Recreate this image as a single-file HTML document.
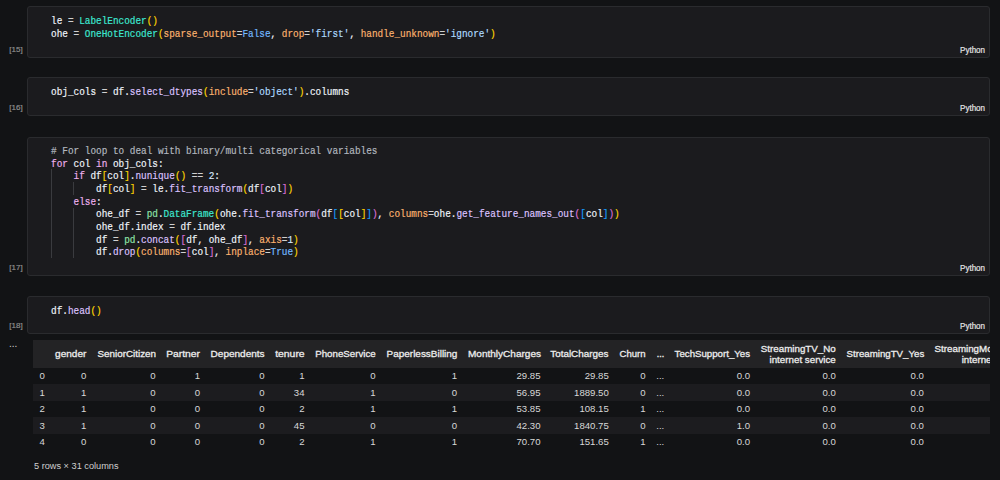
<!DOCTYPE html>
<html><head><meta charset="utf-8">
<style>
html,body{margin:0;padding:0}
body{width:1000px;height:480px;overflow:hidden;position:relative;background:#121315;font-family:"Liberation Sans",sans-serif}
.cell{position:absolute;left:27px;width:961px;background:#1b1b1e;border:1px solid #2a2b2e;border-radius:3px}
.code{position:absolute;left:51px;margin:0;font-family:"Liberation Mono",monospace;-webkit-text-stroke:0.2px;font-size:11.6px;line-height:12.7px;transform:scaleX(0.809);transform-origin:0 0;color:#f0f4fa;white-space:pre}
.py{position:absolute;left:957px;width:28px;margin-top:1.2px;text-align:right;font-size:8.7px;line-height:10px;color:#e4e4e4;-webkit-text-stroke:0.2px;transform:scaleX(0.92);transform-origin:100% 0}
.cnt{position:absolute;left:0px;width:22.7px;margin-top:0.6px;text-align:right;font-size:8px;line-height:10px;color:#8e8e8e;-webkit-text-stroke:0.2px}
.guide{position:absolute;width:1px;background:#3a3b3f}
.tbl{position:absolute;left:33px;top:340px;width:957px;height:112px;overflow:hidden}
.thead{position:absolute;left:0;top:0;width:100%;height:27.5px;background:#232325}
.stripe{position:absolute;left:0;width:100%;background:#1c1c1f}
.th{position:absolute;top:8px;font-size:9.75px;line-height:11px;color:#ececec;-webkit-text-stroke:0.3px;text-align:right;white-space:nowrap;transform-origin:100% 50%}
.th.two{top:2.5px}
.td{position:absolute;margin-top:0.5px;font-size:9.6px;line-height:16.6px;color:#d8d8d8;white-space:nowrap}
.dots{position:absolute;left:9px;top:338px;font-size:10px;line-height:12px;color:#d0d0d0}
.foot{position:absolute;left:34px;top:459px;font-size:9.2px;line-height:14px;color:#d0d0d0}
</style></head><body><div id="root" style="position:absolute;left:0;top:0;width:1000px;height:480px">
<div class="cell" style="top:6px;height:50px"></div>
<pre class="code" style="top:14.8px"><span style="color:#f0f4fa">le</span><span style="color:#d0d0d0"> = </span><span style="color:#3de8d2">LabelEncoder</span><span style="color:#ffd700">()</span>
<span style="color:#f0f4fa">ohe</span><span style="color:#d0d0d0"> = </span><span style="color:#3de8d2">OneHotEncoder</span><span style="color:#ffd700">(</span><span style="color:#fbb26e">sparse_output</span><span style="color:#d0d0d0">=</span><span style="color:#72b8ff">False</span><span style="color:#f0f4fa">, </span><span style="color:#fbb26e">drop</span><span style="color:#d0d0d0">=</span><span style="color:#aedaff">&#x27;first&#x27;</span><span style="color:#f0f4fa">, </span><span style="color:#fbb26e">handle_unknown</span><span style="color:#d0d0d0">=</span><span style="color:#aedaff">&#x27;ignore&#x27;</span><span style="color:#ffd700">)</span></pre>
<div class="py" style="top:44px">Python</div>
<div class="cnt" style="top:44px">[15]</div>
<div class="cell" style="top:77px;height:37px"></div>
<pre class="code" style="top:85.8px"><span style="color:#f0f4fa">obj_cols</span><span style="color:#d0d0d0"> = </span><span style="color:#f0f4fa">df.</span><span style="color:#dcc2ff">select_dtypes</span><span style="color:#ffd700">(</span><span style="color:#fbb26e">include</span><span style="color:#d0d0d0">=</span><span style="color:#aedaff">&#x27;object&#x27;</span><span style="color:#ffd700">)</span><span style="color:#f0f4fa">.columns</span></pre>
<div class="py" style="top:102px">Python</div>
<div class="cnt" style="top:102px">[16]</div>
<div class="cell" style="top:137px;height:137px"></div>
<pre class="code" style="top:144.8px"><span style="color:#b2b7bf"># For loop to deal with binary/multi categorical variables</span>
<span style="color:#eeb0ee">for</span><span style="color:#f0f4fa"> col </span><span style="color:#eeb0ee">in</span><span style="color:#f0f4fa"> obj_cols:</span>
<span style="color:#f0f4fa">    </span><span style="color:#eeb0ee">if</span><span style="color:#f0f4fa"> df</span><span style="color:#ffd700">[</span><span style="color:#f0f4fa">col</span><span style="color:#ffd700">]</span><span style="color:#f0f4fa">.</span><span style="color:#dcc2ff">nunique</span><span style="color:#ffd700">()</span><span style="color:#d0d0d0"> == </span><span style="color:#d8e8ff">2</span><span style="color:#f0f4fa">:</span>
<span style="color:#f0f4fa">        df</span><span style="color:#ffd700">[</span><span style="color:#f0f4fa">col</span><span style="color:#ffd700">]</span><span style="color:#d0d0d0"> = </span><span style="color:#f0f4fa">le.</span><span style="color:#dcc2ff">fit_transform</span><span style="color:#ffd700">(</span><span style="color:#f0f4fa">df</span><span style="color:#da70d6">[</span><span style="color:#f0f4fa">col</span><span style="color:#da70d6">]</span><span style="color:#ffd700">)</span>
<span style="color:#f0f4fa">    </span><span style="color:#eeb0ee">else</span><span style="color:#f0f4fa">:</span>
<span style="color:#f0f4fa">        ohe_df</span><span style="color:#d0d0d0"> = </span><span style="color:#8ee4a8">pd</span><span style="color:#f0f4fa">.</span><span style="color:#3de8d2">DataFrame</span><span style="color:#ffd700">(</span><span style="color:#f0f4fa">ohe.</span><span style="color:#dcc2ff">fit_transform</span><span style="color:#da70d6">(</span><span style="color:#f0f4fa">df</span><span style="color:#179fff">[</span><span style="color:#ffd700">[</span><span style="color:#f0f4fa">col</span><span style="color:#ffd700">]</span><span style="color:#179fff">]</span><span style="color:#da70d6">)</span><span style="color:#f0f4fa">, </span><span style="color:#fbb26e">columns</span><span style="color:#d0d0d0">=</span><span style="color:#f0f4fa">ohe.</span><span style="color:#dcc2ff">get_feature_names_out</span><span style="color:#da70d6">(</span><span style="color:#179fff">[</span><span style="color:#f0f4fa">col</span><span style="color:#179fff">]</span><span style="color:#da70d6">)</span><span style="color:#ffd700">)</span>
<span style="color:#f0f4fa">        ohe_df.index</span><span style="color:#d0d0d0"> = </span><span style="color:#f0f4fa">df.index</span>
<span style="color:#f0f4fa">        df</span><span style="color:#d0d0d0"> = </span><span style="color:#8ee4a8">pd</span><span style="color:#f0f4fa">.</span><span style="color:#dcc2ff">concat</span><span style="color:#ffd700">(</span><span style="color:#da70d6">[</span><span style="color:#f0f4fa">df, ohe_df</span><span style="color:#da70d6">]</span><span style="color:#f0f4fa">, </span><span style="color:#fbb26e">axis</span><span style="color:#d0d0d0">=</span><span style="color:#d8e8ff">1</span><span style="color:#ffd700">)</span>
<span style="color:#f0f4fa">        df.</span><span style="color:#dcc2ff">drop</span><span style="color:#ffd700">(</span><span style="color:#fbb26e">columns</span><span style="color:#d0d0d0">=</span><span style="color:#da70d6">[</span><span style="color:#f0f4fa">col</span><span style="color:#da70d6">]</span><span style="color:#f0f4fa">, </span><span style="color:#fbb26e">inplace</span><span style="color:#d0d0d0">=</span><span style="color:#72b8ff">True</span><span style="color:#ffd700">)</span></pre>
<div class="py" style="top:262px">Python</div>
<div class="cnt" style="top:262px">[17]</div>
<div class="cell" style="top:296px;height:36px"></div>
<pre class="code" style="top:304.8px"><span style="color:#f0f4fa">df.</span><span style="color:#dcc2ff">head</span><span style="color:#ffd700">()</span></pre>
<div class="py" style="top:320px">Python</div>
<div class="cnt" style="top:320px">[18]</div>
<div class="guide" style="left:51px;top:169.4px;height:88.89999999999999px"></div><div class="guide" style="left:72.7px;top:182.1px;height:12.7px"></div><div class="guide" style="left:72.7px;top:207.5px;height:50.8px"></div>
<div class="tbl">
<div class="thead"></div>
<div class="stripe" style="top:44.10000000000002px;height:16.6px"></div>
<div class="stripe" style="top:77.30000000000001px;height:16.6px"></div>
<div class="th" style="right:903.75px;transform:scaleX(1.0293)">gender</div>
<div class="th" style="right:834.50px;transform:scaleX(1.0086)">SeniorCitizen</div>
<div class="th" style="right:790.00px;transform:scaleX(1.0553)">Partner</div>
<div class="th" style="right:725.50px;transform:scaleX(1.0268)">Dependents</div>
<div class="th" style="right:685.50px;transform:scaleX(1.0665)">tenure</div>
<div class="th" style="right:614.50px;transform:scaleX(0.9964)">PhoneService</div>
<div class="th" style="right:533.00px;transform:scaleX(1.0199)">PaperlessBilling</div>
<div class="th" style="right:449.50px;transform:scaleX(1.0282)">MonthlyCharges</div>
<div class="th" style="right:381.25px;transform:scaleX(1.0139)">TotalCharges</div>
<div class="th" style="right:344.50px;transform:scaleX(0.9789)">Churn</div>
<div class="th" style="right:326.25px;transform:scaleX(0.9214)">...</div>
<div class="th" style="right:240.00px;transform:scaleX(0.9924)">TechSupport_Yes</div>
<div class="th two" style="right:154.25px;transform:scaleX(1.0027)">StreamingTV_No<br>internet service</div>
<div class="th" style="right:66.10px;transform:scaleX(0.9926)">StreamingTV_Yes</div>
<div class="th two" style="right:-37.80px">StreamingMovies_No<br>internet service</div>
<div class="td idx" style="top:27.5px;left:6.5px">0</div>
<div class="td" style="top:27.5px;right:903.75px">0</div>
<div class="td" style="top:27.5px;right:834.5px">0</div>
<div class="td" style="top:27.5px;right:790px">1</div>
<div class="td" style="top:27.5px;right:725.5px">0</div>
<div class="td" style="top:27.5px;right:685.5px">1</div>
<div class="td" style="top:27.5px;right:614.5px">0</div>
<div class="td" style="top:27.5px;right:533px">1</div>
<div class="td" style="top:27.5px;right:449.5px">29.85</div>
<div class="td" style="top:27.5px;right:381.25px">29.85</div>
<div class="td" style="top:27.5px;right:344.5px">0</div>
<div class="td" style="top:27.5px;left:623.25px">...</div>
<div class="td" style="top:27.5px;right:240px">0.0</div>
<div class="td" style="top:27.5px;right:154.25px">0.0</div>
<div class="td" style="top:27.5px;right:66.10000000000002px">0.0</div>
<div class="td" style="top:27.5px;right:-37.799999999999955px">0.0</div>
<div class="td idx" style="top:44.10000000000002px;left:6.5px">1</div>
<div class="td" style="top:44.10000000000002px;right:903.75px">1</div>
<div class="td" style="top:44.10000000000002px;right:834.5px">0</div>
<div class="td" style="top:44.10000000000002px;right:790px">0</div>
<div class="td" style="top:44.10000000000002px;right:725.5px">0</div>
<div class="td" style="top:44.10000000000002px;right:685.5px">34</div>
<div class="td" style="top:44.10000000000002px;right:614.5px">1</div>
<div class="td" style="top:44.10000000000002px;right:533px">0</div>
<div class="td" style="top:44.10000000000002px;right:449.5px">56.95</div>
<div class="td" style="top:44.10000000000002px;right:381.25px">1889.50</div>
<div class="td" style="top:44.10000000000002px;right:344.5px">0</div>
<div class="td" style="top:44.10000000000002px;left:623.25px">...</div>
<div class="td" style="top:44.10000000000002px;right:240px">0.0</div>
<div class="td" style="top:44.10000000000002px;right:154.25px">0.0</div>
<div class="td" style="top:44.10000000000002px;right:66.10000000000002px">0.0</div>
<div class="td" style="top:44.10000000000002px;right:-37.799999999999955px">0.0</div>
<div class="td idx" style="top:60.69999999999999px;left:6.5px">2</div>
<div class="td" style="top:60.69999999999999px;right:903.75px">1</div>
<div class="td" style="top:60.69999999999999px;right:834.5px">0</div>
<div class="td" style="top:60.69999999999999px;right:790px">0</div>
<div class="td" style="top:60.69999999999999px;right:725.5px">0</div>
<div class="td" style="top:60.69999999999999px;right:685.5px">2</div>
<div class="td" style="top:60.69999999999999px;right:614.5px">1</div>
<div class="td" style="top:60.69999999999999px;right:533px">1</div>
<div class="td" style="top:60.69999999999999px;right:449.5px">53.85</div>
<div class="td" style="top:60.69999999999999px;right:381.25px">108.15</div>
<div class="td" style="top:60.69999999999999px;right:344.5px">1</div>
<div class="td" style="top:60.69999999999999px;left:623.25px">...</div>
<div class="td" style="top:60.69999999999999px;right:240px">0.0</div>
<div class="td" style="top:60.69999999999999px;right:154.25px">0.0</div>
<div class="td" style="top:60.69999999999999px;right:66.10000000000002px">0.0</div>
<div class="td" style="top:60.69999999999999px;right:-37.799999999999955px">0.0</div>
<div class="td idx" style="top:77.30000000000001px;left:6.5px">3</div>
<div class="td" style="top:77.30000000000001px;right:903.75px">1</div>
<div class="td" style="top:77.30000000000001px;right:834.5px">0</div>
<div class="td" style="top:77.30000000000001px;right:790px">0</div>
<div class="td" style="top:77.30000000000001px;right:725.5px">0</div>
<div class="td" style="top:77.30000000000001px;right:685.5px">45</div>
<div class="td" style="top:77.30000000000001px;right:614.5px">0</div>
<div class="td" style="top:77.30000000000001px;right:533px">0</div>
<div class="td" style="top:77.30000000000001px;right:449.5px">42.30</div>
<div class="td" style="top:77.30000000000001px;right:381.25px">1840.75</div>
<div class="td" style="top:77.30000000000001px;right:344.5px">0</div>
<div class="td" style="top:77.30000000000001px;left:623.25px">...</div>
<div class="td" style="top:77.30000000000001px;right:240px">1.0</div>
<div class="td" style="top:77.30000000000001px;right:154.25px">0.0</div>
<div class="td" style="top:77.30000000000001px;right:66.10000000000002px">0.0</div>
<div class="td" style="top:77.30000000000001px;right:-37.799999999999955px">0.0</div>
<div class="td idx" style="top:93.89999999999998px;left:6.5px">4</div>
<div class="td" style="top:93.89999999999998px;right:903.75px">0</div>
<div class="td" style="top:93.89999999999998px;right:834.5px">0</div>
<div class="td" style="top:93.89999999999998px;right:790px">0</div>
<div class="td" style="top:93.89999999999998px;right:725.5px">0</div>
<div class="td" style="top:93.89999999999998px;right:685.5px">2</div>
<div class="td" style="top:93.89999999999998px;right:614.5px">1</div>
<div class="td" style="top:93.89999999999998px;right:533px">1</div>
<div class="td" style="top:93.89999999999998px;right:449.5px">70.70</div>
<div class="td" style="top:93.89999999999998px;right:381.25px">151.65</div>
<div class="td" style="top:93.89999999999998px;right:344.5px">1</div>
<div class="td" style="top:93.89999999999998px;left:623.25px">...</div>
<div class="td" style="top:93.89999999999998px;right:240px">0.0</div>
<div class="td" style="top:93.89999999999998px;right:154.25px">0.0</div>
<div class="td" style="top:93.89999999999998px;right:66.10000000000002px">0.0</div>
<div class="td" style="top:93.89999999999998px;right:-37.799999999999955px">0.0</div>
</div>
<div class="dots">...</div>
<div class="foot">5 rows × 31 columns</div>
</div></body></html>
